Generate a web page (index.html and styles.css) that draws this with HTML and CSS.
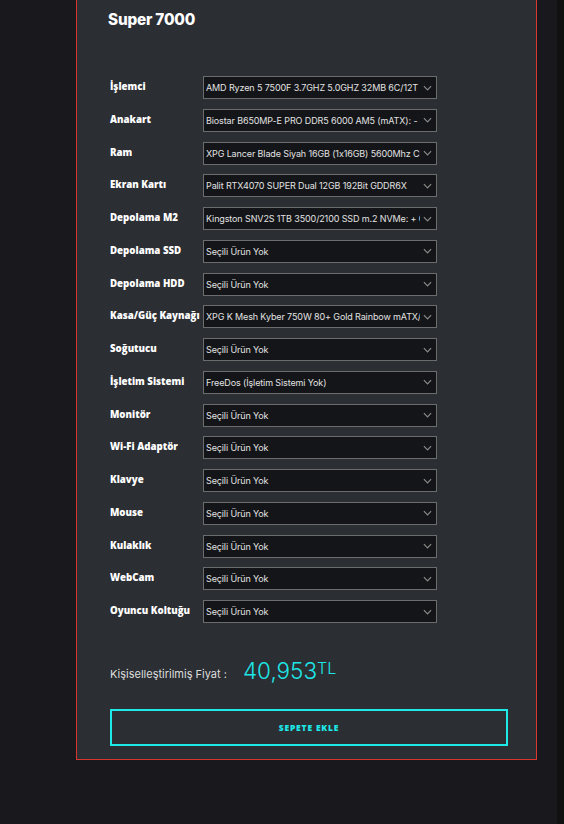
FILE: index.html
```html
<!DOCTYPE html>
<html lang="tr">
<head>
<meta charset="utf-8">
<title>Super 7000</title>
<link rel="stylesheet" href="styles.css">
</head>
<body>
<main class="page">
  <section class="card">
    <h1 class="title">Super 7000</h1>
    <div class="parts">
      <div class="label">İşlemci</div>
      <div class="select"><span class="val">AMD Ryzen 5 7500F 3.7GHZ 5.0GHZ 32MB 6C/12T</span><svg class="chev" viewBox="0 0 10 6"><path d="M1 1l4 4 4-4"/></svg></div>
      <div class="label">Anakart</div>
      <div class="select"><span class="val">Biostar B650MP-E PRO DDR5 6000 AM5 (mATX): - 4.370 TL</span><svg class="chev" viewBox="0 0 10 6"><path d="M1 1l4 4 4-4"/></svg></div>
      <div class="label">Ram</div>
      <div class="select"><span class="val">XPG Lancer Blade Siyah 16GB (1x16GB) 5600Mhz CL46 DDR5</span><svg class="chev" viewBox="0 0 10 6"><path d="M1 1l4 4 4-4"/></svg></div>
      <div class="label">Ekran Kartı</div>
      <div class="select"><span class="val">Palit RTX4070 SUPER Dual 12GB 192Bit GDDR6X</span><svg class="chev" viewBox="0 0 10 6"><path d="M1 1l4 4 4-4"/></svg></div>
      <div class="label">Depolama M2</div>
      <div class="select"><span class="val">Kingston SNV2S 1TB 3500/2100 SSD m.2 NVMe: + 0 TL</span><svg class="chev" viewBox="0 0 10 6"><path d="M1 1l4 4 4-4"/></svg></div>
      <div class="label">Depolama SSD</div>
      <div class="select"><span class="val">Seçili Ürün Yok</span><svg class="chev" viewBox="0 0 10 6"><path d="M1 1l4 4 4-4"/></svg></div>
      <div class="label">Depolama HDD</div>
      <div class="select"><span class="val">Seçili Ürün Yok</span><svg class="chev" viewBox="0 0 10 6"><path d="M1 1l4 4 4-4"/></svg></div>
      <div class="label">Kasa/Güç Kaynağı</div>
      <div class="select"><span class="val">XPG K Mesh Kyber 750W 80+ Gold Rainbow mATX/ATX Kasa</span><svg class="chev" viewBox="0 0 10 6"><path d="M1 1l4 4 4-4"/></svg></div>
      <div class="label">Soğutucu</div>
      <div class="select"><span class="val">Seçili Ürün Yok</span><svg class="chev" viewBox="0 0 10 6"><path d="M1 1l4 4 4-4"/></svg></div>
      <div class="label">İşletim Sistemi</div>
      <div class="select"><span class="val">FreeDos (İşletim Sistemi Yok)</span><svg class="chev" viewBox="0 0 10 6"><path d="M1 1l4 4 4-4"/></svg></div>
      <div class="label">Monitör</div>
      <div class="select"><span class="val">Seçili Ürün Yok</span><svg class="chev" viewBox="0 0 10 6"><path d="M1 1l4 4 4-4"/></svg></div>
      <div class="label">Wi-Fi Adaptör</div>
      <div class="select"><span class="val">Seçili Ürün Yok</span><svg class="chev" viewBox="0 0 10 6"><path d="M1 1l4 4 4-4"/></svg></div>
      <div class="label">Klavye</div>
      <div class="select"><span class="val">Seçili Ürün Yok</span><svg class="chev" viewBox="0 0 10 6"><path d="M1 1l4 4 4-4"/></svg></div>
      <div class="label">Mouse</div>
      <div class="select"><span class="val">Seçili Ürün Yok</span><svg class="chev" viewBox="0 0 10 6"><path d="M1 1l4 4 4-4"/></svg></div>
      <div class="label">Kulaklık</div>
      <div class="select"><span class="val">Seçili Ürün Yok</span><svg class="chev" viewBox="0 0 10 6"><path d="M1 1l4 4 4-4"/></svg></div>
      <div class="label">WebCam</div>
      <div class="select"><span class="val">Seçili Ürün Yok</span><svg class="chev" viewBox="0 0 10 6"><path d="M1 1l4 4 4-4"/></svg></div>
      <div class="label">Oyuncu Koltuğu</div>
      <div class="select"><span class="val">Seçili Ürün Yok</span><svg class="chev" viewBox="0 0 10 6"><path d="M1 1l4 4 4-4"/></svg></div>
    </div>
    <div class="price">
      <span class="price-label">Kişiselleştirilmiş Fiyat :</span>
      <span class="amount">40,953</span><span class="cur">TL</span>
    </div>
    <button class="add" type="button">SEPETE EKLE</button>
  </section>
</main>
<div class="scrollbar"></div>
</body>
</html>
```

FILE: styles.css
```css
html, body {
  margin: 0;
  padding: 0;
  height: 100%;
}
body {
  background: #19191d;
  display: flex;
  font-family: Inter, "Noto Sans", sans-serif;
  color: #fff;
  overflow: hidden;
}
.page {
  flex: 1;
  padding-left: 76px;
}
.scrollbar {
  width: 7px;
  background: #111112;
}
.card {
  width: 461px;
  box-sizing: border-box;
  background: #2b2e33;
  border: 1px solid #d8372f;
  border-top: none;
  padding: 10px 28px 13px 33px;
  display: flex;
  flex-direction: column;
}
.title {
  margin: 0 0 0 -2px;
  font-size: 15.3px;
  line-height: 20px;
  font-weight: 800;
  letter-spacing: -0.2px;
  color: #fff;
}
.parts {
  margin-top: 46px;
  display: grid;
  grid-template-columns: 93px 234px;
  grid-auto-rows: 23px;
  row-gap: 9.75px;
  align-items: center;
}
.label {
  font-family: "Open Sans", Inter, sans-serif;
  font-weight: 800;
  font-size: 9.7px;
  color: #fff;
  white-space: nowrap;
  margin-top: -2px;
}
.select {
  height: 23px;
  box-sizing: border-box;
  border: 1px solid #6c6c6c;
  background: #141518;
  display: flex;
  align-items: center;
  padding: 0 4px 0 2px;
  gap: 3px;
}
.val {
  flex: 1;
  overflow: hidden;
  white-space: nowrap;
  font-size: 9px;
  color: #e2e2e2;
  letter-spacing: -0.12px;
}
.chev {
  width: 9px;
  height: 6px;
  flex: none;
  fill: none;
  stroke: #8a8a8a;
  stroke-width: 1.3;
}
.price {
  margin-top: 35px;
  display: flex;
  align-items: flex-start;
  height: 30px;
}
.price-label {
  font-size: 11px;
  color: #dedede;
  margin-top: 9px;
  margin-right: 16px;
}
.amount {
  font-size: 22.5px;
  font-weight: 300;
  color: #1de6e6;
  line-height: 26px;
}
.cur {
  font-size: 16px;
  font-weight: 300;
  color: #1de6e6;
  line-height: 18px;
  margin-top: 1px;
}
.add {
  margin-top: 21px;
  height: 37px;
  width: 398px;
  background: transparent;
  border: 2px solid #1de9e9;
  color: #1de9e9;
  font-family: "Open Sans", Inter, sans-serif;
  font-weight: 800;
  font-size: 8.5px;
  letter-spacing: 0.8px;
  padding: 0;
}
```
